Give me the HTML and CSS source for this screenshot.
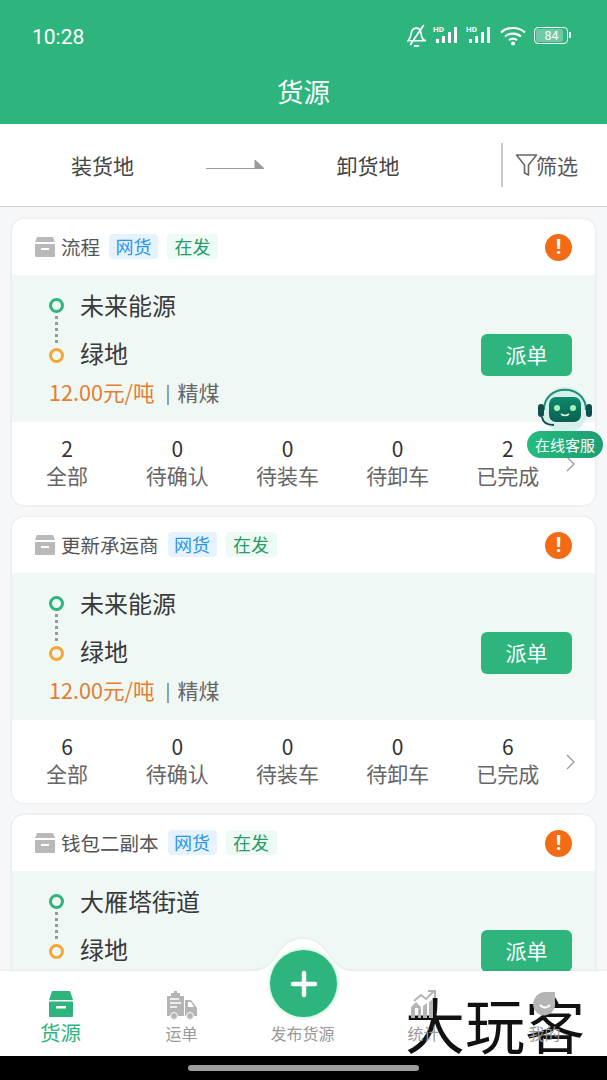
FILE: index.html
```html
<!DOCTYPE html>
<html lang="zh">
<head>
<meta charset="utf-8">
<title>货源</title>
<link rel="stylesheet" href="styles.css">
</head>
<body>
<div class="app">
  <header class="top">
    <div class="status">
      <span class="time">10:28</span>
      <div class="status-icons">
        <svg width="21" height="23" viewBox="0 0 20 22" fill="none" stroke="#fff" stroke-width="1.600"><path d="M1 16c2-2 2.500-4 3-7 .5-3 2.500-5 5-5 2 0 3.500 1 4 3l1 5c.3 1.500 1 3 4 4z"/><path d="M3 20 16 1M6.500 21h5"/></svg>
        <svg width="28" height="20" viewBox="0 0 28 20"><text x="0" y="6.500" class="hd">HD</text><g fill="#fff"><rect x="3" y="14" width="3" height="4"/><rect x="9" y="11" width="3" height="7"/><rect x="15" y="7" width="3" height="11"/><rect x="21" y="2" width="3" height="16"/></g></svg>
        <svg width="28" height="20" viewBox="0 0 28 20"><text x="0" y="6.500" class="hd">HD</text><g fill="#fff"><rect x="3" y="14" width="3" height="4"/><rect x="9" y="11" width="3" height="7"/><rect x="15" y="7" width="3" height="11"/><rect x="21" y="2" width="3" height="16"/></g></svg>
        <svg class="wifi" width="26" height="21" viewBox="0 0 26 21" fill="none" stroke="#fff" stroke-width="2.200"><path d="M1 7.500C7.500 1.500 18.500 1.500 25 7.500M5 11.500c4.500-3.800 11.500-3.800 16 0M9 15c2.500-1.800 5.500-1.800 8 0"/><circle cx="13" cy="18.500" r="2" fill="#fff" stroke="none"/></svg>
        <div class="battery"><span class="battery-body"><span class="battery-fill">84</span></span><span class="battery-cap"></span></div>
      </div>
    </div>
    <h1 class="title">货源</h1>
  </header>

  <section class="filter">
    <div class="place">装货地</div>
    <svg class="arrow" width="60" height="14" viewBox="0 0 60 14"><path d="M1 11.500h58L50 3v8" fill="#9a9a9a" stroke="#9a9a9a" stroke-width="1"/></svg>
    <div class="place">卸货地</div>
    <div class="filter-btn">
      <svg width="23" height="24" viewBox="0 0 23 24" fill="none" stroke="#666" stroke-width="1.600"><path d="M1.500 2h20l-8 10v10l-4-2v-8z" stroke-linejoin="round"/></svg>
      <span>筛选</span>
    </div>
  </section>

  <main class="list">
    <article class="card">
      <div class="card-head">
        <svg class="box" width="22" height="22" viewBox="0 0 22 22"><path d="M3 1h16l2 5H1z" fill="#b9b9b9"/><path d="M1 8h20v12a1 1 0 0 1-1 1H2a1 1 0 0 1-1-1z" fill="#b9b9b9"/><rect x="7" y="12" width="8" height="2" fill="#fff"/></svg>
        <span class="name">流程</span><span class="tag blue">网货</span><span class="tag green">在发</span>
        <span class="alert">!</span>
      </div>
      <div class="card-body">
        <div class="route">
          <div class="stop"><i class="dot start"></i><span>未来能源</span></div>
          <div class="stop"><i class="dot end"></i><span>绿地</span></div>
          <div class="price"><b>12.00元/吨</b><span class="sep">|</span><span>精煤</span></div>
        </div>
        <button class="dispatch">派单</button>
      </div>
      <div class="stats">
        <div class="stat"><span>2</span><span class="label">全部</span></div>
        <div class="stat"><span>0</span><span class="label">待确认</span></div>
        <div class="stat"><span>0</span><span class="label">待装车</span></div>
        <div class="stat"><span>0</span><span class="label">待卸车</span></div>
        <div class="stat"><span>2</span><span class="label">已完成</span></div>
        <svg class="chev" width="10" height="18" viewBox="0 0 10 18" fill="none" stroke="#999" stroke-width="1.300"><path d="M1 2l7 7-7 7"/></svg>
      </div>
    </article>

    <article class="card">
      <div class="card-head">
        <svg class="box" width="22" height="22" viewBox="0 0 22 22"><path d="M3 1h16l2 5H1z" fill="#b9b9b9"/><path d="M1 8h20v12a1 1 0 0 1-1 1H2a1 1 0 0 1-1-1z" fill="#b9b9b9"/><rect x="7" y="12" width="8" height="2" fill="#fff"/></svg>
        <span class="name">更新承运商</span><span class="tag blue">网货</span><span class="tag green">在发</span>
        <span class="alert">!</span>
      </div>
      <div class="card-body">
        <div class="route">
          <div class="stop"><i class="dot start"></i><span>未来能源</span></div>
          <div class="stop"><i class="dot end"></i><span>绿地</span></div>
          <div class="price"><b>12.00元/吨</b><span class="sep">|</span><span>精煤</span></div>
        </div>
        <button class="dispatch">派单</button>
      </div>
      <div class="stats">
        <div class="stat"><span>6</span><span class="label">全部</span></div>
        <div class="stat"><span>0</span><span class="label">待确认</span></div>
        <div class="stat"><span>0</span><span class="label">待装车</span></div>
        <div class="stat"><span>0</span><span class="label">待卸车</span></div>
        <div class="stat"><span>6</span><span class="label">已完成</span></div>
        <svg class="chev" width="10" height="18" viewBox="0 0 10 18" fill="none" stroke="#999" stroke-width="1.300"><path d="M1 2l7 7-7 7"/></svg>
      </div>
    </article>

    <article class="card">
      <div class="card-head">
        <svg class="box" width="22" height="22" viewBox="0 0 22 22"><path d="M3 1h16l2 5H1z" fill="#b9b9b9"/><path d="M1 8h20v12a1 1 0 0 1-1 1H2a1 1 0 0 1-1-1z" fill="#b9b9b9"/><rect x="7" y="12" width="8" height="2" fill="#fff"/></svg>
        <span class="name">钱包二副本</span><span class="tag blue">网货</span><span class="tag green">在发</span>
        <span class="alert">!</span>
      </div>
      <div class="card-body">
        <div class="route">
          <div class="stop"><i class="dot start"></i><span>大雁塔街道</span></div>
          <div class="stop"><i class="dot end"></i><span>绿地</span></div>
          <div class="price"><b>12.00元/吨</b><span class="sep">|</span><span>精煤</span></div>
        </div>
        <button class="dispatch">派单</button>
      </div>
    </article>
  </main>

  <aside class="service">
    <svg width="62" height="50" viewBox="0 0 62 50">
      <defs><linearGradient id="face" x1="0" y1="0" x2="0" y2="1"><stop offset="0" stop-color="#0e8a6c"/><stop offset="1" stop-color="#0a5f52"/></linearGradient></defs>
      <circle cx="31" cy="26" r="23" fill="#d6f0ec"/>
      <path d="M10 26C10 -1 52 -1 52 26" fill="none" stroke="#1f8f76" stroke-width="2"/>
      <rect x="4" y="20" width="6" height="13" rx="3" fill="#0f4f50"/>
      <rect x="52" y="20" width="6" height="13" rx="3" fill="#0f4f50"/>
      <rect x="15" y="13" width="32" height="25" rx="7" fill="url(#face)"/>
      <circle cx="23" cy="24" r="3" fill="#a6f3c0"/><circle cx="39" cy="24" r="3" fill="#a6f3c0"/>
      <path d="M27 30q4 3 8 0" fill="none" stroke="#d6f7e0" stroke-width="1.600"/>
      <path d="M8 33q1 8 12 8" fill="none" stroke="#0f4f50" stroke-width="2"/>
    </svg>
    <span class="service-label">在线客服</span>
  </aside>

  <footer class="bottom">
    <svg class="hump" width="120" height="34" viewBox="0 0 120 34"><path d="M0 34C20 34 26 30 36 15 43 5 50 1 60 1s17 4 24 14c10 15 16 19 36 19z" fill="#fff"/></svg>
    <div class="fab"><svg width="28" height="28" viewBox="0 0 28 28"><path d="M14 3v22M3 14h22" stroke="#fff" stroke-width="4.500" stroke-linecap="round"/></svg></div>
    <nav class="tabs">
      <div class="tab active">
        <svg width="28" height="28" viewBox="0 0 28 28"><path d="M5 1h18l3 9H2z" fill="#2db57d"/><path d="M2 11.500h24V26a1 1 0 0 1-1 1H3a1 1 0 0 1-1-1z" fill="#2db57d"/><rect x="9" y="16" width="10" height="2.500" fill="#fff"/></svg>
        <span>货源</span>
      </div>
      <div class="tab">
        <svg width="32" height="30" viewBox="0 0 32 30"><path d="M1 6h4V3h3V1h3v2h3v3h4v20H1z" fill="#b5b5b5"/><path d="M19 10h6l6 8v8H19z" fill="#b5b5b5"/><path d="M4 9h9M4 13h11M4 17h7" stroke="#fff" stroke-width="1.500"/><path d="M22 12h3l3 5h-6z" fill="#fff"/><circle cx="8" cy="26" r="3.500" fill="#b5b5b5" stroke="#fff"/><circle cx="24" cy="26" r="3.500" fill="#b5b5b5" stroke="#fff"/></svg>
        <span>运单</span>
      </div>
      <div class="tab publish"><span>发布货源</span></div>
      <div class="tab">
        <svg width="30" height="30" viewBox="0 0 30 30"><path d="M2 28V17l5-5 5 5v11h-3V18H6v10zM14 28V16l4-3v15zM20 28V12l4-3v19z" fill="#b5b5b5"/><path d="M5 11 12 5l5 4 8-8M19 1h7v7" fill="none" stroke="#b5b5b5" stroke-width="2"/></svg>
        <span>统计</span>
      </div>
      <div class="tab">
        <svg width="30" height="30" viewBox="0 0 30 30"><path d="M15 2h10v11a11 11 0 1 1-21 -3C6 5 10 2 15 2z" fill="#b5b5b5"/><path d="M10 15q5 5 10 0" fill="none" stroke="#fff" stroke-width="2"/></svg>
        <span>我的</span>
      </div>
    </nav>
    <div class="home-bar"><span></span></div>
  </footer>

  <div class="watermark">大玩客</div>
</div>
</body>
</html>
```

FILE: styles.css
```css
* { box-sizing: border-box; }
html, body { margin: 0; padding: 0; }
body {
  width: 607px;
  height: 1080px;
  overflow: hidden;
  font-family: "Noto Sans CJK SC", "Noto Sans", sans-serif;
  background: #f5f7f9;
  color: #333;
}
.app { position: relative; width: 607px; height: 1080px; overflow: hidden; }

.top { height: 124px; background: #2db57d; color: #fff; }
.status {
  height: 72px;
  padding: 13px 36px 0 32px;
  display: flex;
  justify-content: space-between;
  align-items: flex-start;
}
.time { font-family: Roboto, sans-serif; font-size: 21px; line-height: 46px; height: 46px; margin-top: 1px; }
.status-icons { display: flex; align-items: center; gap: 5px; height: 46px; margin-top: -1px; }
.wifi { margin-left: 1px; }
.hd { font: bold 8px Roboto, sans-serif; fill: #fff; }
.battery { display: flex; align-items: center; margin-left: 3px; }
.battery-body { width: 34px; height: 17px; border: 1px solid #fff; border-radius: 4px; padding: 1px; display: flex; }
.battery-fill { width: 27px; background: rgba(255, 255, 255, .3); border-radius: 2px; font: 12.500px/13px Roboto, sans-serif; text-align: center; padding-left: 4px; }
.battery-cap { width: 2px; height: 6px; background: #fff; margin-left: 1px; border-radius: 0 1px 1px 0; }
.title { margin: 0; height: 40px; font-size: 26.500px; font-weight: 400; line-height: 38px; text-align: center; }

.filter {
  height: 83px;
  background: #fff;
  border-bottom: 1px solid #d4d4d8;
  display: grid;
  grid-template-columns: 205px 60px 206px 1fr;
  align-items: center;
}
.place { font-size: 21px; color: #444; text-align: center; margin-top: -1px; }
.arrow { margin-top: -3px; }
.filter-btn {
  height: 44px;
  margin-left: 30px;
  padding-left: 12px;
  border-left: 2px solid #c8c8c8;
  display: flex;
  align-items: center;
  font-size: 21px;
  color: #555;
}
.filter-btn svg { margin-right: -2px; }
.filter-btn span { margin-top: -1px; }

.list { padding: 12px 12px 0; display: flex; flex-direction: column; gap: 12px; }
.card {
  height: 286px;
  flex: none;
  background: #fff;
  border-radius: 12px;
  box-shadow: 0 0 3px rgba(0, 0, 0, .12);
  overflow: hidden;
}
.card-head { height: 56px; padding: 0 23px 0 22px; display: flex; align-items: center; }
.box { margin-right: 5px; }
.name { font-size: 19.500px; color: #555; margin: -2px 9px 0 0; }
.tag { font-size: 18px; line-height: 25px; height: 25px; border-radius: 4px; margin: -1px 9px 0 0; }
.tag.blue { background: #e6f2fd; color: #2a95ea; padding: 0 6.500px; }
.tag.green { background: #eefaf4; color: #2a9a6b; padding: 0 7.500px; }
.alert {
  margin-left: auto;
  width: 27px;
  height: 27px;
  border-radius: 50%;
  background: #f36c15;
  color: #fff;
  font: bold 21px/27px Roboto, sans-serif;
  text-align: center;
}
.card-body {
  height: 147px;
  background: #f0f8f5;
  padding: 6px 23px 0 37px;
  display: flex;
  justify-content: space-between;
}
.route { display: flex; flex-direction: column; }
.stop { height: 48px; display: flex; align-items: center; gap: 16px; font-size: 24px; color: #3a3a3a; position: relative; }
.stop span { margin-top: -1px; }
.stop:first-child::after {
  content: "";
  position: absolute;
  left: 6px;
  top: 35px;
  height: 27px;
  border-left: 3px dotted #999;
}
.dot { width: 15px; height: 15px; border-radius: 50%; border: 3px solid; flex: none; background: transparent; }
.dot.start { border-color: #2db57d; }
.dot.end { border-color: #f7a533; margin-top: 4px; }
.price { margin-top: 0; font-size: 21px; color: #666; display: flex; align-items: center; line-height: 30px; }
.price b { font-weight: 400; color: #e57d32; font-size: 21.600px; }
.sep { margin: 0 7px 0 11px; font-size: 18px; }
.dispatch {
  align-self: flex-start;
  margin-top: 53px;
  width: 91px;
  height: 42px;
  border: 0;
  border-radius: 6px;
  background: #2db57d;
  color: #fff;
  font: 21px "Noto Sans CJK SC", sans-serif;
  padding: 0 0 2px;
}

.stats { height: 83px; position: relative; padding: 12px 32px 0 0; display: grid; grid-template-columns: repeat(5, 110.200px); }
.stat { display: flex; flex-direction: column; align-items: center; font-size: 21px; line-height: 28px; color: #333; }
.stat .label { color: #666; margin-top: -1px; }
.chev { position: absolute; right: 19px; top: 33px; }

.service { position: absolute; left: 527px; top: 384px; width: 76px; display: flex; flex-direction: column; align-items: center; }
.service svg { display: block; margin-bottom: -3px; }
.service-label {
  position: relative;
  width: 76px;
  height: 27px;
  border-radius: 14px;
  background: linear-gradient(90deg, #22bd7f, #1f9d72);
  color: #fff;
  font-size: 15px;
  line-height: 27px;
  text-align: center;
  white-space: nowrap;
}

.bottom { position: absolute; left: 0; right: 0; top: 971px; height: 109px; background: #fff; box-shadow: 0 -1px 2px rgba(0, 0, 0, .06); }
.hump {
  position: absolute;
  left: 243px;
  top: -33px;
  filter: drop-shadow(0 -1px 1px rgba(0, 0, 0, .06));
}
.fab {
  position: absolute;
  left: 270px;
  top: -21px;
  width: 67px;
  height: 67px;
  border-radius: 50%;
  background: #2db57d;
  box-shadow: 0 0 4px #9fe8c8;
  display: flex;
  align-items: center;
  justify-content: center;
}
.tabs { height: 85px; display: grid; grid-template-columns: repeat(5, 1fr); padding: 0 2px 0 0; }
.tab { display: flex; flex-direction: column; align-items: center; justify-content: flex-end; padding-bottom: 12px; gap: 2px; font-size: 16px; line-height: 22px; color: #999; position: relative; z-index: 1; }
.tab.active { color: #2db57d; font-size: 20.500px; line-height: 26px; padding-bottom: 11px; gap: 1px; }
.home-bar { height: 24px; background: #000; display: flex; justify-content: center; padding-top: 9px; }
.home-bar span { width: 231px; height: 6px; border-radius: 3px; background: #9e9e9e; }

.watermark {
  position: absolute;
  left: 405px;
  top: 991px;
  font-size: 60px;
  line-height: 64px;
  color: #111;
  white-space: nowrap;
}
```
